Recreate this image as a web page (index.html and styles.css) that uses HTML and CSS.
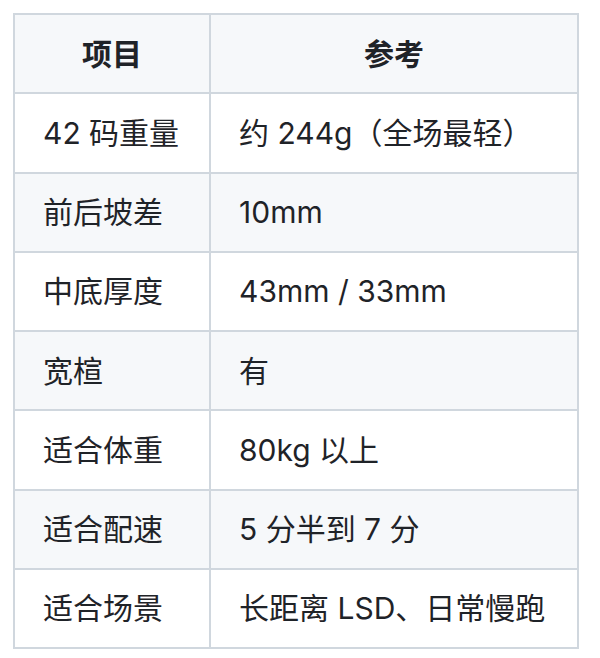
FILE: index.html
```html
<!DOCTYPE html>
<html lang="zh-CN">
<head>
<meta charset="utf-8">
<title>参数表</title>
<link rel="stylesheet" href="styles.css">
</head>
<body>
<table class="spec">
  <colgroup><col class="c1"><col class="c2"></colgroup>
  <thead>
    <tr><th>项目</th><th>参考</th></tr>
  </thead>
  <tbody>
    <tr><td>42 码重量</td><td>约 244g（全场最轻）</td></tr>
    <tr><td>前后坡差</td><td>10mm</td></tr>
    <tr><td>中底厚度</td><td>43mm / 33mm</td></tr>
    <tr><td>宽楦</td><td>有</td></tr>
    <tr><td>适合体重</td><td>80kg 以上</td></tr>
    <tr><td>适合配速</td><td>5 分半到 7 分</td></tr>
    <tr><td>适合场景</td><td>长距离 LSD、日常慢跑</td></tr>
  </tbody>
</table>
</body>
</html>
```
FILE: styles.css
```css
html, body {
  margin: 0;
  background: #ffffff;
}
body {
  padding: 13px;
  font-family: Inter, "Noto Sans CJK SC", sans-serif;
  color: #1f2328;
}
.spec {
  border-collapse: collapse;
  table-layout: fixed;
  width: 566px;
}
.spec .c1 { width: 196px; }
.spec th, .spec td {
  border: 2px solid #d0d7de;
  padding: 16.5px 28px 16px;
  font-size: 30px;
  line-height: 44.75px;
  text-align: left;
  white-space: nowrap;
}
.spec th {
  text-align: center;
  font-weight: 700;
  background: #f6f8fa;
}
.spec tbody tr:nth-child(2n) td {
  background: #f6f8fa;
}
```
